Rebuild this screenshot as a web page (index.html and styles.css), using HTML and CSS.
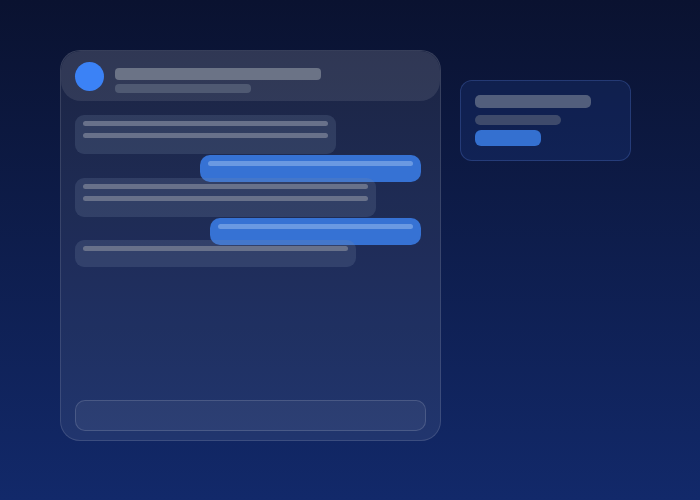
FILE: index.html
```html
<!DOCTYPE html>
<html>
<head>
<meta charset="utf-8">
<link rel="stylesheet" href="styles.css">
</head>
<body>
<div class="scene">
  <div class="chat">
    <div class="chat-head">
      <div class="avatar"></div>
      <div class="head-text">
        <div class="bar title"></div>
        <div class="bar subtitle"></div>
      </div>
    </div>
    <div class="messages">
      <div class="msg in w1"><div class="line"></div><div class="line"></div></div>
      <div class="msg out w2 up"><div class="line"></div></div>
      <div class="msg in w3"><div class="line"></div><div class="line"></div></div>
      <div class="msg out w4 up2"><div class="line"></div></div>
      <div class="msg in w5 short"><div class="line"></div></div>
    </div>
    <div class="input"></div>
  </div>
  <div class="side">
    <div class="sbar s1"></div>
    <div class="sbar s2"></div>
    <div class="sbar s3"></div>
  </div>
</div>
</body>
</html>
```
FILE: styles.css
```css
html, body { margin: 0; padding: 0; }
body {
  width: 700px;
  height: 500px;
  background: linear-gradient(180deg, #0a1230 0%, #12296a 100%);
  font-family: "Liberation Sans", sans-serif;
  overflow: hidden;
}
.scene {
  display: flex;
  align-items: flex-start;
  padding: 50px 0 0 60px;
  gap: 19px;
}
.chat {
  width: 379px;
  height: 389px;
  border: 1px solid rgba(255,255,255,0.12);
  border-radius: 20px;
  background: rgba(255,255,255,0.07);
  display: flex;
  flex-direction: column;
  overflow: hidden;
}
.chat-head {
  height: 50px;
  background: rgba(255,255,255,0.09);
  display: flex;
  align-items: flex-start;
  padding: 0 14px;
  gap: 11px;
  border-radius: 20px;
  flex-shrink: 0;
}
.avatar {
  width: 29px;
  height: 29px;
  border-radius: 50%;
  background: #3b82f6;
  flex-shrink: 0;
  margin-top: 11px;
}
.head-text { display: flex; flex-direction: column; gap: 4px; margin-top: 17px; }
.bar { border-radius: 4px; }
.title { width: 206px; height: 12px; background: #6b7386; }
.subtitle { width: 136px; height: 9px; background: #4f5972; }
.messages {
  display: flex;
  flex-direction: column;
  padding: 14px 19px 0 14px;
  gap: 1px;
}
.msg {
  border-radius: 9px;
  padding: 6px 8px 0;
  box-sizing: border-box;
  display: flex;
  flex-direction: column;
  gap: 7px;
}
.msg .line { height: 5px; border-radius: 3px; }
.in { background: rgba(120,135,170,0.22); align-self: flex-start; height: 39px; }
.in .line { background: #68718a; }
.in.short { height: 27px; }
.out { background: #3672d4; align-self: flex-end; height: 27px; border-radius: 10px; }
.out .line { background: #6a99e2; }
.w1 { width: 261px; }
.w2 { width: 221px; }
.w3 { width: 301px; }
.w4 { width: 211px; }
.w5 { width: 281px; }
.up { margin-bottom: -5px; }
.up2 { margin-bottom: -6px; }
.input {
  margin: auto 14px 9px;
  height: 29px;
  border: 1px solid rgba(255,255,255,0.14);
  border-radius: 10px;
  background: rgba(255,255,255,0.05);
}
.side {
  margin-top: 30px;
  width: 169px;
  height: 79px;
  border: 1px solid rgba(100,140,230,0.25);
  border-radius: 12px;
  background: rgba(40,80,170,0.18);
  display: flex;
  flex-direction: column;
  align-items: flex-start;
}
.sbar { border-radius: 5px; margin-left: 14px; }
.s1 { width: 116px; height: 13px; background: #525e7c; margin-top: 14px; }
.s2 { width: 86px; height: 10px; background: #3e4a6b; margin-top: 7px; }
.s3 { width: 66px; height: 16px; background: #3470d0; margin-top: 5px; border-radius: 6px; }
```
